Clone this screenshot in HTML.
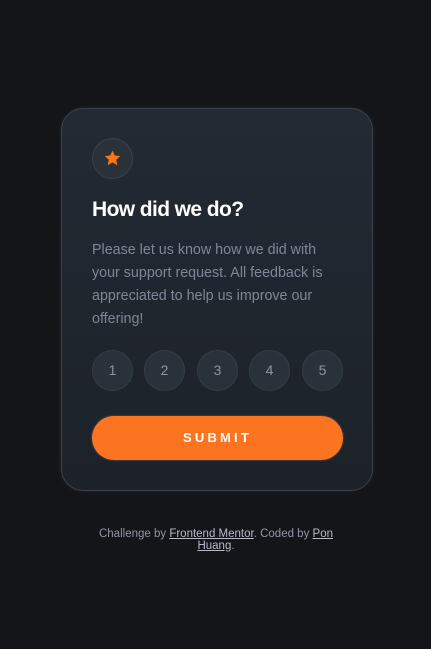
<!DOCTYPE html>
<html><head><style>
*{margin:0;padding:0;box-sizing:border-box}
body{width:431px;height:649px;background:#131518;font-family:"Liberation Sans",sans-serif;position:relative;overflow:hidden}
.card{position:absolute;left:61px;top:108px;width:312px;height:383px;border-radius:22px;background:linear-gradient(180deg,#232a34,#1d2229);border:1px solid #3c424b;box-shadow:0 0 6px rgba(255,255,255,.06)}
.star{position:absolute;left:30px;top:29px;width:41px;height:41px;border-radius:50%;background:#29313b;border:1px solid #3a414b}
.star svg{position:absolute;left:11px;top:11px}
h1{position:absolute;left:30px;top:89px;color:#fff;font-size:21px;font-weight:bold;letter-spacing:-.6px}
p{position:absolute;left:30px;top:130px;width:250px;color:#7d8797;font-size:14.3px;line-height:23px}
.r{position:absolute;top:241px;width:41px;height:41px;border-radius:50%;background:#29313b;border:1px solid #363d47;color:#8a93a1;font-size:14px;text-align:center;line-height:39px}
.sub{position:absolute;left:30px;top:307px;width:251px;height:44px;border-radius:22px;background:#fc7420;color:#fff;font-size:13px;font-weight:bold;letter-spacing:3.2px;text-align:center;line-height:44px;box-shadow:0 0 2px rgba(255,255,255,.3)}
.foot{position:absolute;left:90px;top:528px;width:252px;text-align:center;color:#8d95a4;font-size:11.5px;line-height:12px}
.foot a{color:#b4bbc7;text-decoration:underline}
</style></head><body>
<div class="card">
<div class="star"><svg width="17" height="16" viewBox="0 0 17 16"><path d="M8.5 0.5l2.3 5 5.4.6-4 3.7 1.1 5.4-4.8-2.8-4.8 2.8 1.1-5.4-4-3.7 5.4-.6z" fill="#fc7614"/></svg></div>
<h1>How did we do?</h1>
<p>Please let us know how we did with your support request. All feedback is appreciated to help us improve our offering!</p>
<div class="r" style="left:30px">1</div>
<div class="r" style="left:82px">2</div>
<div class="r" style="left:135px">3</div>
<div class="r" style="left:187px">4</div>
<div class="r" style="left:240px">5</div>
<div class="sub">SUBMIT</div>
</div>
<div class="foot">Challenge by <a>Frontend Mentor</a>. Coded by <a>Pon Huang</a>.</div>
</body></html>
